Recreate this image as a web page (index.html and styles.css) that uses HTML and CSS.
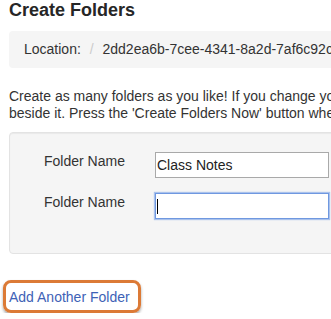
FILE: index.html
```html
<!DOCTYPE html>
<html lang="en">
  <head>
    <meta charset="UTF-8" />
    <meta name="viewport" content="width=device-width, initial-scale=1.0" />
    <title>Create Folders</title>
    <link rel="stylesheet" href="styles.css">
  </head>
  <body>
    <div class="page">
      <h2 class="title">Create Folders</h2>
      <ol class="breadcrumb">
        <li>Location:</li>
        <li>2dd2ea6b-7cee-4341-8a2d-7af6c92c1e4b</li>
      </ol>
      <p class="intro">
        Create as many folders as you like! If you change your mind, click the Remove button<br />
        beside it. Press the 'Create Folders Now' button when you are finished.
      </p>
      <div class="well">
        <div class="form-row">
          <label for="folder1">Folder Name</label>
          <input type="text" id="folder1" value="Class Notes" />
        </div>
        <div class="form-row">
          <label for="folder2">Folder Name</label>
          <span class="field">
            <input type="text" id="folder2" class="focused" />
            <span class="caret"></span>
          </span>
        </div>
      </div>
      <span class="highlight">
        <a href="#" class="add-link">Add Another Folder</a>
      </span>
    </div>
  </body>
</html>
```

FILE: styles.css
```css
html,
body {
  overflow: hidden;
}

body {
  margin: 0;
  padding: 0;
  background-color: #ffffff;
  font-family: "Liberation Sans", Arial, sans-serif;
  font-size: 14px;
  color: #333333;
}

.page {
  width: 700px;
  padding-left: 9px;
}

.title {
  margin: 0 0 11px;
  font-size: 18px;
  line-height: 20px;
  font-weight: bold;
  color: #262626;
}

.breadcrumb {
  list-style: none;
  margin: 0 0 20px;
  padding: 8px 15px;
  line-height: 21px;
  background-color: #f5f5f5;
  border-radius: 4px;
}

.breadcrumb li {
  display: inline-block;
}

.breadcrumb li + li:before {
  content: "/\00a0";
  padding: 0 5px;
  color: #cccccc;
}

.intro {
  margin: 0 0 10px;
  line-height: 17px;
}

.well {
  padding: 19px;
  margin-bottom: 26px;
  background-color: #f5f5f5;
  border: 1px solid #e3e3e3;
  border-radius: 4px;
  box-shadow: inset 0 1px 1px rgba(0, 0, 0, 0.05);
}

.form-row {
  display: flex;
  align-items: flex-start;
  margin-bottom: 15px;
}

.form-row label {
  width: 111px;
  padding-left: 15px;
  line-height: 18px;
}

.field {
  position: relative;
  display: block;
}

.form-row input {
  display: block;
  box-sizing: border-box;
  width: 174px;
  height: 26px;
  margin: 0;
  padding: 0 1px;
  font-family: "Liberation Sans", Arial, sans-serif;
  font-size: 14px;
  color: #222222;
  background-color: #ffffff;
  border: 1px solid #a9a9a9;
  border-radius: 0;
  outline: none;
}

.form-row input.focused {
  border-color: #6f98e0;
  box-shadow: 0 0 1px 1px rgba(120, 160, 230, 0.6);
}

.caret {
  position: absolute;
  left: 2px;
  top: 6px;
  width: 1px;
  height: 15px;
  background-color: #000000;
}

.highlight {
  display: inline-block;
  margin-left: -6px;
  padding: 4px 8px 3px 3px;
  border: 3px solid #dc7a36;
  border-radius: 8px;
  box-shadow: 0 2px 3px rgba(0, 0, 0, 0.35);
  line-height: 20px;
}

.add-link {
  color: #3e62b6;
  text-decoration: none;
}
```
